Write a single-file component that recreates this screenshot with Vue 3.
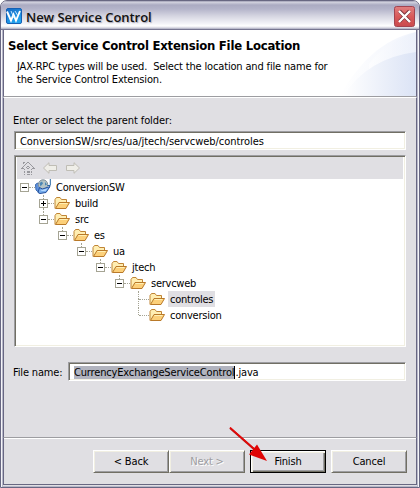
<script setup>
const rows = [
  { label: 'ConversionSW', level: 0, state: 'open', project: true },
  { label: 'build', level: 1, state: 'closed', tail: 'joined' },
  { label: 'src', level: 1, state: 'open' },
  { label: 'es', level: 2, state: 'open' },
  { label: 'ua', level: 3, state: 'open' },
  { label: 'jtech', level: 4, state: 'open' },
  { label: 'servcweb', level: 5, state: 'open' },
  { label: 'controles', level: 6, state: 'leaf', selected: true, tail: 'joined' },
  { label: 'conversion', level: 6, state: 'leaf' },
]
</script>

<template>
  <div class="window">
    <header class="titlebar">
      <svg class="app-icon" viewBox="0 0 16 16">
        <defs>
          <linearGradient id="appBlue" x1="0" y1="0" x2="0.5" y2="1">
            <stop offset="0" stop-color="#1769c4" /><stop offset="1" stop-color="#22a4f0" />
          </linearGradient>
        </defs>
        <rect x=".5" y=".5" width="15" height="15" rx="1.5" fill="url(#appBlue)" stroke="#1560b4" />
        <path d="M1 3.500l4 9 2.500-6 2.500 6 4-9.500" fill="none" stroke="#fff" stroke-width="1.900" />
        <path d="M5 3l3 7M9 3l3 5" stroke="#d5edff" stroke-width=".9" />
      </svg>
      <span class="title">New Service Control</span>
      <button class="close" aria-label="Close">
        <svg viewBox="0 0 21 21">
          <defs>
            <linearGradient id="closeRed" x1="0" y1="0" x2="0" y2="1">
              <stop offset="0" stop-color="#e08080" /><stop offset=".5" stop-color="#d95a5a" /><stop offset="1" stop-color="#c94a4e" />
            </linearGradient>
          </defs>
          <rect x=".5" y=".5" width="20" height="20" rx="2" fill="url(#closeRed)" stroke="#a34450" />
          <path d="M5.500 5l10 10.500M15.500 5l-10 10.500" stroke="#722f38" stroke-width="3.600" />
          <path d="M5 5l11 11M16 5l-11 11" stroke="#fff" stroke-width="2.400" />
        </svg>
      </button>
    </header>

    <section class="banner">
      <svg class="swoosh" viewBox="0 0 76 66">
        <defs>
          <linearGradient id="wash" x1="0" y1="0" x2="1" y2="0">
            <stop offset="0" stop-color="#fff" /><stop offset="1" stop-color="#e9eefa" />
          </linearGradient>
          <linearGradient id="washDeep" x1="0" y1="0" x2="1" y2="0">
            <stop offset="0" stop-color="#fff" /><stop offset="1" stop-color="#dbe3f5" />
          </linearGradient>
        </defs>
        <path d="M0 66C18 34 42 9 76 2V66z" fill="url(#wash)" opacity=".65" />
        <path d="M29 34Q46 12 76 2V66H29z" fill="url(#wash)" opacity=".6" />
        <path d="M3 66Q28 28 76 22V66z" fill="url(#washDeep)" />
      </svg>
      <h1>Select Service Control Extension File Location</h1>
      <p>JAX-RPC types will be used.&nbsp; Select the location and file name for<br>the Service Control Extension.</p>
    </section>

    <main class="body">
      <label class="folder-label">Enter or select the parent folder:</label>
      <div class="field folder"><span>ConversionSW/src/es/ua/jtech/servcweb/controles</span></div>

      <div class="browser">
        <div class="toolbar">
          <svg class="tool" viewBox="0 0 14 16" shape-rendering="crispEdges">
            <path d="M2 2.500h2M2 3.500h1M6 2.500h2M5 3.500h1M8 3.500h1M4 4.500h1M9 4.500h1M3 5.500h1M10 5.500h1M2 6.500h1M6 6.500h2M11 6.500h1M1 7.500h1M5 7.500h1M8 7.500h1M12 7.500h1M0 8.500h3M6 8.500h2M11 8.500h3M3 9.500h1M10 9.500h1M3 11.500h1M6 11.500h3M10 11.500h1M3 12.500h1M6 12.500h3M10 12.500h1M3 14.500h1M6 14.500h3M10 14.500h1" stroke="#98989d" />
          </svg>
          <svg class="tool arrow" viewBox="0 0 14 12">
            <path d="M.5 6L6 .7V3.500h7.500v5H6v2.800z" fill="#efeee8" stroke="#bfbdb5" />
          </svg>
          <svg class="tool arrow" viewBox="0 0 14 12">
            <path d="M13.500 6L8 .7V3.500H.5v5H8v2.800z" fill="#efeee8" stroke="#bfbdb5" />
          </svg>
        </div>
        <ul class="tree">
          <li v-for="r in rows" :key="r.label" :class="[r.state, r.tail]" :style="{ paddingLeft: 4 + r.level * 19 + 'px' }">
            <span class="node">
              <svg v-if="r.state !== 'leaf'" class="expander" viewBox="0 0 9 9" shape-rendering="crispEdges">
                <rect x=".5" y=".5" width="8" height="8" fill="#fff" stroke="#a5a494" />
                <path d="M2 4.500h5" stroke="#000" />
                <path v-if="r.state === 'closed'" d="M4.500 2v5" stroke="#000" />
              </svg>
            </span>
            <span class="dots"></span>
            <svg v-if="r.project" class="icon" viewBox="0 0 16 16">
              <path d="M.5 5.500l2-1.500 2 3v7l-3.500-3z" fill="#5f92dc" stroke="#3767ad" />
              <circle cx="8" cy="5.500" r="4.700" fill="#b4c4c6" stroke="#82909a" />
              <path d="M4.500 4l2.500-1.500 1 2-2.500 3zM10 3l2 2.500-2 1z" fill="#4b86b4" />
              <path d="M3 13.500l1.500-5 3 1.500 7.500-2.500-4 6-6 1z" fill="#74abea" stroke="#244f9d" />
              <path d="M6.500 11l6-1.500-2 2.500H6z" fill="#b4d8ff" />
              <path d="M15.300 0v6M12.500 6.500h3" stroke="#2567a4" />
            </svg>
            <svg v-else class="icon" viewBox="0 0 16 16">
              <path d="M1 13.500V4.500L2.500 2.500H6L7.500 4.500H12.500V8" fill="#ffeeb2" stroke="#c08535" />
              <path d="M1.500 13.500L5 7.500H15.500L12 13.500z" fill="#fcd07a" stroke="#b97929" />
              <path d="M5.500 8.500H13.500" stroke="#fff0b4" />
            </svg>
            <span class="name" :class="{ selected: r.selected }">{{ r.label }}</span>
          </li>
        </ul>
      </div>

      <div class="file-row">
        <label>File name:</label>
        <div class="field file"><span class="marked">CurrencyExchangeServiceControl</span><i class="caret"></i><span>.java</span></div>
      </div>
    </main>

    <footer class="actions">
      <button class="btn">&lt; Back</button>
      <button class="btn disabled">Next &gt;</button>
      <button class="btn primary">Finish</button>
      <button class="btn">Cancel</button>
      <svg class="pointer" viewBox="0 0 40 36">
        <path d="M1 1L26 23" stroke="#ba1111" stroke-width="2" />
        <path d="M1 .5L26 22.500" stroke="#e80808" stroke-width="1.400" />
        <path d="M38 34L20 27.500L28 17.500z" fill="#e00505" />
      </svg>
    </footer>
  </div>
</template>

<style>
body { margin: 0; background: #fff; overflow: hidden; }
</style>

<style scoped>
* { box-sizing: border-box; }
.window {
  width: 420px; height: 488px; display: flex; flex-direction: column;
  background: #e0dfe3; border: 1px solid #686782; border-radius: 7px 7px 0 0;
  padding: 0 2px 2px; box-shadow: inset 1px 0 #f5f5f8, inset -1px 0 #f5f5f8, inset 2px 0 #b7b7c9, inset -2px -1px #b7b7c9;
  font: 11px/13px "DejaVu Sans Condensed", "DejaVu Sans", sans-serif; font-stretch: condensed;
  color: #000; letter-spacing: -.16px; white-space: nowrap;
}
.titlebar {
  height: 29px; margin: 0 -2px; padding: 5px 4px 0 5px; display: flex; align-items: flex-start; flex: none;
  border-radius: 6px 6px 0 0; border-bottom: 1px solid #777691;
  background: linear-gradient(#8d8ca5 0, #d4d4e0 1px, #ababc2 4px, #b4b4ca 8px, #d5d5e1 15px, #f1f1f6 22px, #fff 25px, #d0d0dc 27px, #a5a5ba 28px);
}
.app-icon { width: 16px; height: 16px; margin-top: 2px; }
.title { margin: 3px 0 0 4px; font: 600 13px/16px "Open Sans", "Noto Sans", sans-serif; letter-spacing: -.05px; color: #111; text-shadow: 1px 1px 1px #aaa9b8; }
.close { margin-left: auto; width: 21px; height: 21px; border: 0; padding: 0; background: none; }
.close svg { display: block; width: 21px; height: 21px; }
.banner, .body, .actions { border-left: 1px solid #686782; border-right: 1px solid #686782; }
.banner { height: 67px; position: relative; background: #fff; border-bottom: 1px solid #9d9da1; padding: 8px 0 0 4px; flex: none; }
.swoosh { position: absolute; right: 0; top: 0; width: 76px; height: 66px; }
h1 { margin: 0; position: relative; font: bold 13px/15px "DejaVu Sans Condensed", "DejaVu Sans", sans-serif; font-stretch: condensed; letter-spacing: -.24px; }
p { margin: 7px 0 0 9px; position: relative; line-height: 13px; }
.body { flex: 1; padding: 16px 10px 0 9px; border-top: 1px solid #fff; }
.folder-label { display: block; height: 13px; margin-bottom: 4px; letter-spacing: -.1px; }
.field { height: 19px; background: #fff; border: 1px solid; border-color: #9d9da1 #fff #fff #9d9da1; box-shadow: inset 1px 1px #716f64, inset -1px -1px #f1efe2; padding: 3px 5px 0 5px; }
.folder { margin: 0 0 5px 1px; letter-spacing: -.06px; }
.browser { height: 192px; margin: 0 0 0 1px; background: #fff; border: 1px solid; border-color: #9d9da1 #fff #fff #9d9da1; box-shadow: inset 1px 1px #716f64, inset -1px -1px #f1efe2; padding: 1px; }
.toolbar { height: 22px; background: #e0dfe3; background-clip: content-box; margin: 0 1px 0 1px; padding: 0; display: flex; align-items: center; gap: 9px; }
.tool { width: 14px; height: 16px; }
.tool:first-child { margin-left: 4px; margin-right: -1px; }
.arrow { height: 12px; }
.tree { list-style: none; margin: 0; padding: 0; letter-spacing: -.25px; }
.tree li { height: 16px; display: flex; align-items: center; position: relative; }
.node { width: 9px; height: 9px; margin-top: 1px; position: relative; flex: none; }
.expander { display: block; width: 9px; height: 9px; position: relative; z-index: 1; }
.node::before { content: ""; position: absolute; left: 4px; top: -4px; height: 4px; border-left: 1px dotted #a5a494; }
.tree li:first-child .node::before { display: none; }
.leaf .node::before { height: 8px; }
.joined .node::after { content: ""; position: absolute; left: 4px; top: 9px; height: 4px; border-left: 1px dotted #a5a494; }
.leaf.joined .node::after { top: 4px; height: 9px; }
.dots { width: 6px; margin-top: 1px; border-top: 1px dotted #a5a494; flex: none; }
.leaf .dots { width: 10px; margin-left: -4px; }
.icon { width: 16px; height: 16px; flex: none; }
.name { height: 16px; line-height: 17px; margin-left: 3px; padding: 0 2px; }
.selected { background: #e0dfe3; }
.file-row { display: flex; align-items: center; gap: 6px; margin-top: 15px; height: 19px; }
.file-row label { width: 49px; padding-top: 1px; }
.file { flex: 1; display: flex; padding-left: 5px; padding-top: 3px; }
.marked { background: #b2b4bf; height: 13px; }
.caret { width: 1px; height: 13px; background: #000; }
.actions { height: 48px; flex: none; position: relative; display: flex; border-top: 1px solid #9d9da1; border-bottom: 1px solid #686782; box-shadow: inset 0 1px #fff; padding: 12px 8px 0 89px; }
.btn { width: 76px; height: 23px; padding: 0 0 1px; font: inherit; letter-spacing: inherit; font-stretch: inherit; color: #000; background: #e0dfe3; border: 1px solid; border-color: #fff #716f64 #716f64 #fff; box-shadow: inset 1px 1px #f1efe2, inset -1px -1px #9d9da1; border-radius: 0; }
.disabled { color: #9d9da1; text-shadow: 1px 1px #fff; }
.primary { margin: 0 5px; border: 1px solid #000; box-shadow: inset 1px 1px #fff, inset 2px 2px #f1efe2, inset -1px -1px #716f64, inset -2px -2px #9d9da1; }
.pointer { position: absolute; left: 225px; top: -11px; width: 40px; height: 36px; }
</style>
